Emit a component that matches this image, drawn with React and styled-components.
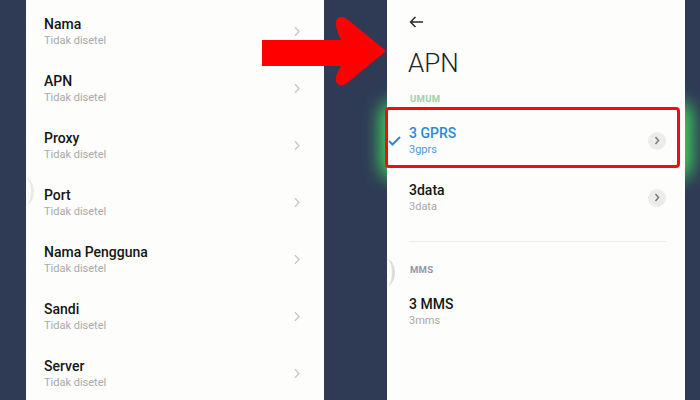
import React from 'react'
import styled, { createGlobalStyle } from 'styled-components'

const GlobalStyle = createGlobalStyle`
  html, body {
    margin: 0;
    padding: 0;
    background: #2f3b55;
  }
  body {
    font-family: Roboto, 'Noto Sans', sans-serif;
  }
`

const Page = styled.div`
  position: relative;
  display: flex;
  gap: 63px;
  width: 700px;
  height: 400px;
  padding-left: 26px;
  box-sizing: border-box;
  overflow: hidden;
  background: #2f3b55;
`

const Column = styled.div`
  position: relative;
  width: 298px;
  height: 100%;
`

const Panel = styled.div`
  position: relative;
  z-index: 1;
  height: 100%;
  box-sizing: border-box;
  background: #fdfdfc;
  padding-top: ${props => props.$top}px;
`

// green glow spilling out behind the selected row
const Glow = styled.div`
  position: absolute;
  left: -6px;
  right: -6px;
  top: 102px;
  height: 76px;
  border-radius: 14px;
  background: #3fe35f;
  filter: blur(9px);
`

const EdgeArc = styled.div`
  position: absolute;
  left: -9px;
  top: ${props => props.$top}px;
  width: 14px;
  height: 27px;
  border-right: 3px solid ${props => props.$color};
  border-radius: 50%;
`

const FieldRow = styled.div`
  display: flex;
  align-items: center;
  justify-content: space-between;
  height: 57px;
  padding: 0 23px 0 18px;
  box-sizing: border-box;
`

const Title = styled.div`
  font-size: 14px;
  font-weight: 500;
  line-height: 17px;
  color: ${props => (props.$active ? '#2e88d8' : '#161616')};
`

const Subtitle = styled.div`
  margin-top: 1px;
  font-size: 11px;
  line-height: 14px;
  color: ${props => (props.$active ? '#4a9be0' : '#a9a9a9')};
`

const BackButton = styled.div`
  height: 16px;
  padding-left: 22px;
  display: flex;
  align-items: center;
`

const Heading = styled.h1`
  margin: 18px 0 0 21px;
  font-size: 26px;
  font-weight: 300;
  line-height: 30px;
  color: #222;
`

const SectionLabel = styled.div`
  margin-top: ${props => props.$gap}px;
  padding-left: 23px;
  font-size: 9.5px;
  font-weight: 700;
  letter-spacing: 0.3px;
  line-height: 12px;
  color: ${props => props.$color};
`

const ApnRow = styled.div`
  position: relative;
  display: grid;
  grid-template-columns: 22px 1fr auto;
  align-items: center;
  height: 57px;
  padding-right: 19px;
  box-sizing: border-box;
  margin-top: ${props => props.$gap || 0}px;
`

const CheckSlot = styled.div`
  display: flex;
  padding-left: 1px;
`

const RoundChevron = styled.div`
  display: flex;
  align-items: center;
  justify-content: center;
  width: 18px;
  height: 18px;
  border-radius: 50%;
  background: #ececec;
`

const Highlight = styled.div`
  position: absolute;
  top: -5px;
  bottom: 1px;
  left: -2px;
  right: 5px;
  border: 3px solid #f20c0c;
  border-radius: 4px;
`

const Divider = styled.div`
  height: 1px;
  margin: 15px 19px 0 22px;
  background: #ececec;
`

const ArrowOverlay = styled.svg`
  position: absolute;
  left: 262px;
  top: 15px;
  z-index: 2;
`

const fields = ['Nama', 'APN', 'Proxy', 'Port', 'Nama Pengguna', 'Sandi', 'Server']

const apnGeneral = [
  { name: '3 GPRS', value: '3gprs', active: true },
  { name: '3data', value: '3data' },
]

const Chevron = () => (
  <svg width="8" height="11" viewBox="0 0 8 11">
    <path d="M2 1.2 L6 5.5 L2 9.8" fill="none" stroke="#c6c6c6" strokeWidth="1.3" />
  </svg>
)

const SmallChevron = () => (
  <svg width="6" height="9" viewBox="0 0 6 9">
    <path d="M1.5 1 L4.5 4.5 L1.5 8" fill="none" stroke="#7a7a7a" strokeWidth="1.5" />
  </svg>
)

const Check = () => (
  <svg width="13" height="10" viewBox="0 0 13 10">
    <path d="M1 5 L4.5 8.5 L12 1" fill="none" stroke="#2e88d8" strokeWidth="2" />
  </svg>
)

const BackArrow = () => (
  <svg width="15" height="12" viewBox="0 0 15 12">
    <path d="M14 6 H1.5 M6.5 1 L1.5 6 L6.5 11" fill="none" stroke="#2a2a2a" strokeWidth="1.5" />
  </svg>
)

const ApnItem = ({ item, gap }) => (
  <ApnRow $gap={gap}>
    <CheckSlot>{item.active && <Check />}</CheckSlot>
    <div>
      <Title $active={item.active}>{item.name}</Title>
      <Subtitle $active={item.active}>{item.value}</Subtitle>
    </div>
    {item.chevron !== false && (
      <RoundChevron>
        <SmallChevron />
      </RoundChevron>
    )}
    {item.active && <Highlight />}
  </ApnRow>
)

export default function App() {
  return (
    <>
      <GlobalStyle />
      <Page>
        <Column>
          <Panel $top={3}>
            <EdgeArc $top={178} $color="#e9e9e9" />
            {fields.map(field => (
              <FieldRow key={field}>
                <div>
                  <Title>{field}</Title>
                  <Subtitle>Tidak disetel</Subtitle>
                </div>
                <Chevron />
              </FieldRow>
            ))}
          </Panel>
        </Column>

        <Column>
          <Glow />
          <Panel $top={14}>
            <EdgeArc $top={259} $color="#dcdcdc" />
            <BackButton>
              <BackArrow />
            </BackButton>
            <Heading>APN</Heading>
            <SectionLabel $gap={15} $color="#9dd0ab">UMUM</SectionLabel>
            <ApnItem item={apnGeneral[0]} gap={7} />
            <ApnItem item={apnGeneral[1]} />
            <Divider />
            <SectionLabel $gap={22} $color="#8f95ae">MMS</SectionLabel>
            <ApnItem item={{ name: '3 MMS', value: '3mms', chevron: false }} gap={7} />
          </Panel>
        </Column>

        <ArrowOverlay width="126" height="74" viewBox="262 15 126 74">
          <path
            d="M262 40 H341 C337 31 334 23 337 19 C339 16 343 16 347 19 L386 51 L347 83 C343 86 339 86 337 83 C334 79 337 72 341 66 H262 Z"
            fill="#ff0000"
          />
        </ArrowOverlay>
      </Page>
    </>
  )
}
